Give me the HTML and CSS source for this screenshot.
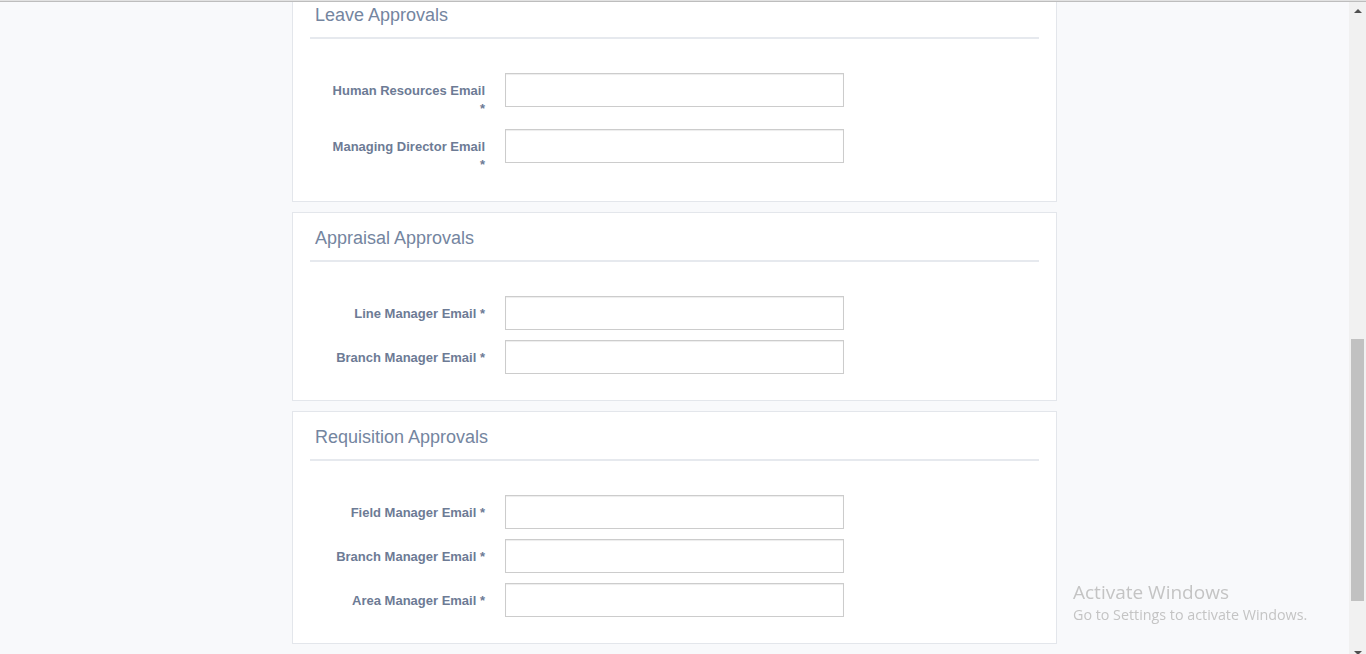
FILE: index.html
```html
<!DOCTYPE html>
<html lang="en">
<head>
<meta charset="utf-8">
<title>Approvals Settings</title>
<link rel="stylesheet" href="styles.css">
</head>
<body>
<div class="topline"></div>
<div class="window">
  <main class="page">
    <div class="cards">
      <section class="card">
        <h3 class="card-title">Leave Approvals</h3>
        <div class="divider"></div>
        <div class="row">
          <label class="lbl">Human Resources Email *</label>
          <input class="field" type="text">
        </div>
        <div class="row">
          <label class="lbl">Managing Director Email *</label>
          <input class="field" type="text">
        </div>
      </section>
      <section class="card">
        <h3 class="card-title">Appraisal Approvals</h3>
        <div class="divider"></div>
        <div class="row">
          <label class="lbl">Line Manager Email *</label>
          <input class="field" type="text">
        </div>
        <div class="row">
          <label class="lbl">Branch Manager Email *</label>
          <input class="field" type="text">
        </div>
      </section>
      <section class="card">
        <h3 class="card-title">Requisition Approvals</h3>
        <div class="divider"></div>
        <div class="row">
          <label class="lbl">Field Manager Email *</label>
          <input class="field" type="text">
        </div>
        <div class="row">
          <label class="lbl">Branch Manager Email *</label>
          <input class="field" type="text">
        </div>
        <div class="row">
          <label class="lbl">Area Manager Email *</label>
          <input class="field" type="text">
        </div>
      </section>
    </div>
  </main>
  <div class="scrollbar">
    <div class="sb-btn"><span class="arrow-up"></span></div>
    <div class="sb-thumb"></div>
    <div class="sb-space"></div>
    <div class="sb-btn"><span class="arrow-down"></span></div>
  </div>
</div>
<div class="watermark">
  <div class="wm-title">Activate Windows</div>
  <div class="wm-sub">Go to Settings to activate Windows.</div>
</div>
</body>
</html>
```
FILE: styles.css
```css
html, body {
  margin: 0;
  padding: 0;
  height: 654px;
  overflow: hidden;
  background: #f8f9fb;
  font-family: "Liberation Sans", Arial, sans-serif;
}

.topline {
  position: fixed;
  top: 0;
  left: 0;
  right: 0;
  height: 2px;
  background: linear-gradient(#e2e2e2 0 1px, #bdbdbd 1px 2px);
  z-index: 5;
}

.window {
  display: flex;
  height: 654px;
}

.page {
  flex: 1;
  display: flex;
  flex-direction: column;
  align-items: center;
  overflow: hidden;
}

.cards {
  width: 765px;
  margin-top: -11px;
  display: flex;
  flex-direction: column;
  gap: 10px;
}

.card {
  box-sizing: border-box;
  background: #ffffff;
  border: 1px solid #e3e6eb;
  padding: 0 17px 16px;
}

.card-title {
  margin: 0 0 12px;
  padding: 15px 0 0 5px;
  font-size: 18px;
  line-height: 20px;
  font-weight: normal;
  color: #7485a0;
}

.divider {
  height: 2px;
  background: #e6e9ee;
  margin-bottom: 34px;
}

.row {
  display: grid;
  grid-template-columns: 175px 339px;
  column-gap: 20px;
  margin-bottom: 10px;
  align-items: start;
}

.lbl {
  box-sizing: border-box;
  text-align: right;
  padding: 9px 0 1px 20px;
  font-size: 13px;
  line-height: 18px;
  font-weight: bold;
  color: #6d7b95;
}

.field {
  box-sizing: border-box;
  height: 34px;
  width: 339px;
  margin: 0;
  border: 1px solid #cccccc;
  border-radius: 0;
  background: #fff;
  box-shadow: inset 0 1px 1px rgba(0, 0, 0, 0.075);
  outline: none;
}

.scrollbar {
  width: 17px;
  background: #f1f1f1;
  display: flex;
  flex-direction: column;
  align-items: center;
}

.sb-btn {
  height: 17px;
  width: 17px;
  display: flex;
  align-items: center;
  justify-content: center;
}

.arrow-up {
  width: 0;
  height: 0;
  border-left: 4px solid transparent;
  border-right: 4px solid transparent;
  border-bottom: 4px solid #505050;
  margin-top: 4px;
}

.arrow-down {
  width: 0;
  height: 0;
  border-left: 4px solid transparent;
  border-right: 4px solid transparent;
  border-top: 4px solid #505050;
  margin-top: 14px;
}

.sb-thumb {
  width: 13px;
  height: 262px;
  margin-top: 322px;
  background: #c1c1c1;
}

.sb-space {
  flex: 1;
}

.watermark {
  position: fixed;
  left: 1073px;
  top: 580px;
  color: #c4c4c4;
  font-family: "Open Sans", "Noto Sans", sans-serif;
  pointer-events: none;
}

.wm-title {
  font-size: 19px;
  line-height: 24px;
}

.wm-sub {
  font-size: 14.3px;
  line-height: 22px;
}
```
